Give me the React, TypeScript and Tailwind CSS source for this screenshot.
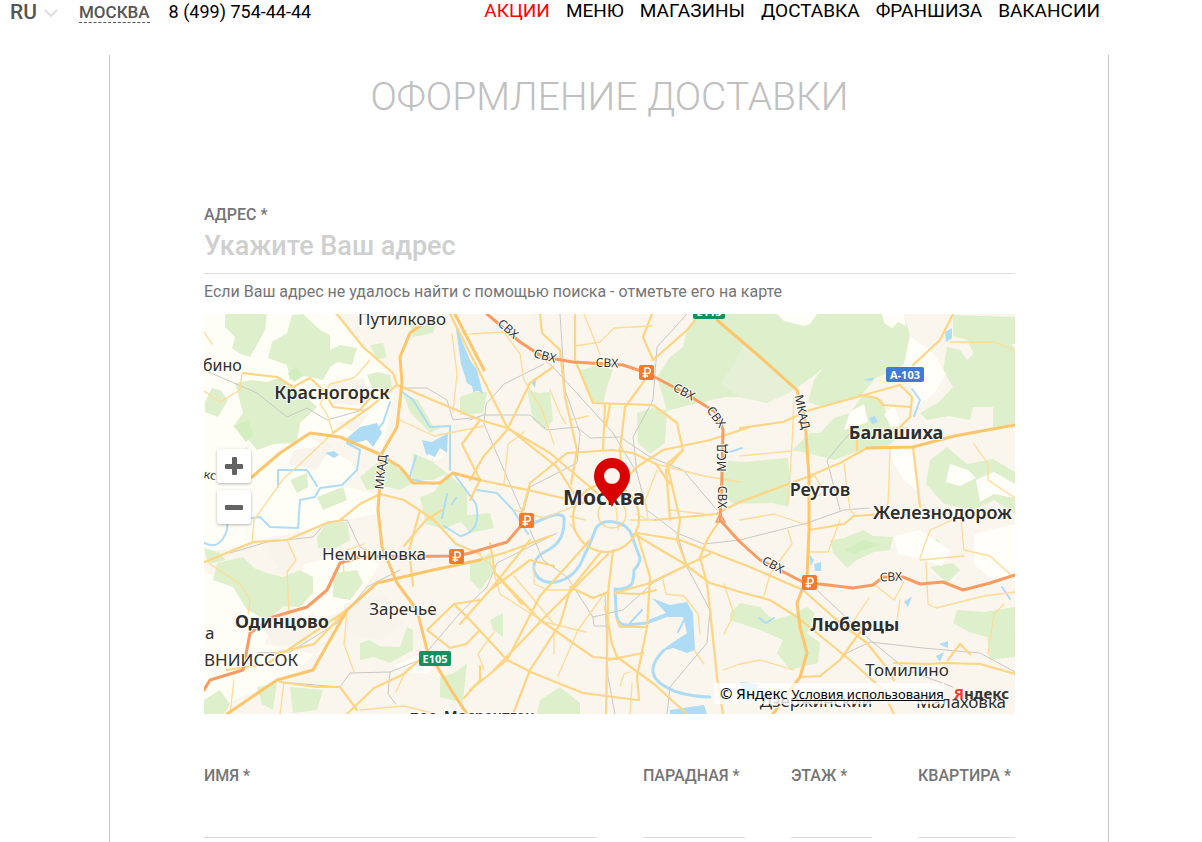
import { useState } from "react";
import clsx from "clsx";

const NAV_LINKS = ["АКЦИИ", "МЕНЮ", "МАГАЗИНЫ", "ДОСТАВКА", "ФРАНШИЗА", "ВАКАНСИИ"];

const FOREST = [
    "M21,0 63,0 61,16 55,27 46,43 36,40 28,34 31,23 21,13Z",
    "M88,1 99,0 116,16 126,21 126,36 136,31 153,34 148,51 134,48 126,53 119,66 100,62 86,66 83,51 64,44 68,28 83,19Z",
    "M31,69 48,66 63,68 74,64 84,69 99,80 113,93 96,109 93,129 70,130 53,136 39,119 29,113 39,99Z",
    "M1,88 8,74 16,76 24,86 14,103 1,98Z",
    "M166,31 179,29 183,43 173,46Z",
    "M163,61 174,58 186,61 189,79 169,76Z",
    "M206,9 233,6 229,19 209,23Z",
    "M156,163 172,150 183,143 196,156 209,169 196,176 183,173 163,176Z",
    "M209,139 229,148 243,159 229,166 208,166Z",
    "M216,183 230,178 243,159 263,176 263,205 240,215 222,210Z",
    "M86,166 103,159 104,173 93,179Z",
    "M113,183 139,173 143,186 119,196Z",
    "M199,79 214,86 229,112 240,112 226,119 206,98Z",
    "M256,83 270,78 283,78 279,99 256,101Z",
    "M323,76 335,79 346,78 349,106 341,116 329,106Z",
    "M376,56 396,51 409,56 403,73 399,89 388,88Z",
    "M493,0 483,16 479,33 466,43 453,63 458,80 463,97 485,91 500,88 520,83 536,83 563,89 590,76 612,60 620,53 610,66 604,88 616,92 653,83 658,80 672,64 690,56 700,50 706,22 700,0Z",
    "M433,99 448,94 463,96 461,129 446,140 434,129Z",
    "M743,33 756,36 763,46 780,30 803,23 811,36 811,110 789,113 789,93 769,93 766,106 745,102 723,106 716,99 735,88 749,73 739,56Z",
    "M749,1 811,3 811,30 790,28 770,40 763,26 749,22Z",
    "M616,119 630,104 646,99 659,81 679,86 686,113 706,113 683,133 659,136 630,146 603,139 588,136 606,119Z",
    "M516,146 540,148 584,144 586,169 584,193 569,189 530,190 516,180Z",
    "M726,146 743,133 763,150 789,145 811,158 811,200 790,186 770,196 740,190 722,170Z",
    "M0,234 14,238 22,246 4,250Z",
    "M113,223 123,209 143,208 146,226 129,236 114,234Z",
    "M13,249 39,243 50,254 63,259 79,263 96,256 109,263 109,279 96,293 80,292 63,306 43,296 29,273 9,266Z",
    "M129,259 153,256 159,269 146,286 129,283Z",
    "M156,329 165,326 176,332 196,333 203,313 209,316 209,336 186,349 170,343 156,346Z",
    "M236,363 250,359 263,349 259,389 236,383Z",
    "M86,373 119,376 113,396 89,399Z",
    "M53,373 73,369 69,396 58,390Z",
    "M0,386 16,376 26,390 20,400 0,400Z",
    "M266,249 286,239 289,259 276,276 266,266Z",
    "M252,202 286,199 290,214 266,219Z",
    "M286,306 299,299 299,323 289,316Z",
    "M333,400 336,386 356,373 376,389 376,400Z",
    "M526,299 536,289 556,293 569,306 590,300 603,293 611,299 603,319 616,329 614,349 586,356 573,339 579,326 556,316 526,306Z",
    "M626,226 640,224 659,216 669,222 689,223 686,236 670,238 653,246 643,254 629,239Z",
    "M733,224 738,233 730,241 726,241Z",
    "M726,253 749,249 756,256 743,269Z",
    "M749,309 753,296 780,298 811,293 811,343 786,346 783,323 765,318Z",
];

const OUTSKIRTS = [
    "M0,0 130,0 160,35 185,60 190,80 178,138 140,124 106,119 50,160 0,180Z",
    "M0,100 30,120 60,140 100,120 150,150 152,160 138,171 110,176 94,190 60,206 0,200Z",
    "M94,180 140,172 170,180 172,200 140,206 110,214 60,226 0,240 0,200Z",
    "M0,256 40,280 70,310 60,330 110,340 90,360 0,400Z",
    "M100,250 150,240 176,250 150,290 110,310 90,296Z",
];

const CLEARINGS = [
    "M573,0 613,0 606,10 600,12 580,7Z",
    "M678,0 700,0 702,12 694,8 688,14 680,9Z",
    "M706,22 730,40 742,60 730,80 712,92 706,70 700,50Z",
    "M646,98 660,90 664,108 640,116Z",
    "M680,100 690,92 696,108 688,114Z",
    "M684,136 710,136 716,180 700,166 690,150Z",
    "M746,150 764,156 772,164 756,172 742,168Z",
    "M772,166 790,158 811,170 811,184 790,180 776,188Z",
    "M690,222 716,216 746,236 738,252 714,244 694,240Z",
    "M770,220 811,210 811,262 786,264 770,250Z",
    "M220,338 232,346 224,360 204,358 190,352Z",
];

const PONDS = [
    "M251,8 259,29 266,46 273,56 279,80 263,69 257,50Z",
    "M266,53 271,53 278,76 269,78Z",
    "M156,113 173,109 178,119 169,133 163,126 143,131 143,124Z",
    "M218,126 228,128 244,119 243,139 236,134 229,146 222,140Z",
    "M121,139 130,137 135,141 130,144Z",
    "M448,284 466,291 483,288 489,299 491,336 483,339 469,334 456,338 465,331 483,319 479,303 463,303 444,310 444,306 462,299Z",
    "M741,18 748,14 748,24 742,28Z",
    "M659,66 670,63 668,67Z",
    "M665,104 671,102 674,108 668,110Z",
    "M605,240 610,246 607,252Z",
    "M610,250 617,248 617,257 611,257Z",
    "M700,288 708,282 704,293Z",
    "M735,330 744,327 744,334Z",
    "M732,342 740,338 736,348Z",
    "M536,368 554,370 550,386 540,388Z",
    "M466,396 486,393 500,391 503,400 466,400Z",
    "M327,68 332,66 331,74Z",
];

const RIVERS = [
    "M186,88 179,109 173,116",
    "M143,129 156,136 153,156 138,171 116,174 111,183 96,186 94,214 66,213 56,203 48,204",
    "M0,229 Q16,237 23,216 L24,200",
    "M74,173 74,156 103,156 113,172",
    "M196,76 209,86 226,113 246,112 246,156",
    "M212,142 205,165 230,170",
    "M250,160 262,176 272,190 Q278,218 256,222 L240,212",
    "M238,204 243,180 M248,190 252,184",
    "M273,176 293,179 309,196 324,220",
    "M708,75 716,86 710,102",
    "M526,138 538,134",
    "M555,304 562,309 570,304",
    "M426,309 438,296 M474,318 480,306",
    "M798,273 806,285",
];

const MOSKVA_RIVER =
    "M324,212 Q340,204 350,201 Q362,199 360,208 Q360,228 344,236 Q328,244 330,256 Q334,270 352,268 Q372,264 380,242 Q388,226 392,214 Q398,206 410,208 Q424,210 428,222 Q432,234 436,244 Q436,250 430,256 Q430,266 427,271 Q420,276 411,275 L412,296 Q412,312 424,311 L443,309";

const STREETS = [
    "M0,18 8,30 M0,77 16,88 36,76 38,59",
    "M129,119 123,100 116,90 126,70 150,64 166,46",
    "M48,228 50,206 80,164 96,150 129,119",
    "M83,226 92,246 83,258 85,300",
    "M6,250 36,270 46,286 44,300",
    "M140,258 138,238 160,230 M143,296 140,330 150,358",
    "M248,20 253,60 249,98 M196,106 230,122 280,112",
    "M266,20 300,18 316,40 320,66 338,96 350,130",
    "M371,32 396,28 410,14 448,12 M346,76 356,100 362,110",
    "M300,170 304,130 320,118 M366,106 384,102 M380,0 396,40",
    "M276,242 288,252 296,280 340,308 382,318",
    "M310,262 350,310 M330,252 330,270 344,276 366,276",
    "M354,362 374,316 400,280 M350,340 350,320",
    "M416,372 420,360 426,358 M426,400 428,370",
    "M459,266 462,280 480,282 494,300 496,320 M520,270 530,300 520,320",
    "M519,356 536,350 556,346 590,356",
    "M590,83 588,130 584,190 M536,142 588,137",
    "M684,190 686,136 M746,28 790,28 811,36",
    "M770,130 784,150 784,166 811,184",
    "M603,164 611,162 620,178 607,186 M640,150 646,196 650,200",
    "M536,206 570,200 606,212 M605,238 624,238 636,206",
    "M716,244 726,216 748,206 M757,206 760,236 786,242 806,260",
    "M716,246 760,242 M722,248 724,290 732,294 780,282 811,278",
    "M671,271 690,286 700,268 M693,306 696,286",
    "M665,284 650,306 M784,340 790,300 800,290",
    "M584,216 588,230 566,260 560,282",
    "M280,356 274,340 290,318 M490,336 500,350",
    "M192,378 202,356 228,338 240,366",
    "M80,368 76,400 M30,366 26,400 M156,396 200,392 232,400",
    "M379,189 340,204 310,196 M381,206 366,202 M426,206 452,206",
    "M366,210 380,230 M410,170 414,216 M432,200 444,206 442,190",
    "M452,150 500,162 536,168 M466,196 500,200 M453,156 440,190",
];

const ROADS = [
    "M133,0 159,33 189,59 193,71 276,106 303,114 346,139 393,179",
    "M39,59 73,63 89,73 106,64 119,76 129,93 156,96 166,84",
    "M129,119 166,93 193,71",
    "M246,0 273,53 303,113 353,153 376,189",
    "M276,166 333,178 379,189",
    "M1,248 49,228 83,226 123,209 139,206",
    "M136,206 156,190 176,180 200,186 230,206 252,230 276,240",
    "M276,106 258,130 276,166 266,186",
    "M76,368 112,373 136,373 153,396",
    "M143,400 170,374 200,360 222,340",
    "M223,316 250,290 276,286 M223,316 246,334 262,330 276,316",
    "M216,196 205,236 209,272 M200,232 222,206 238,196",
    "M143,296 110,330 69,340 M143,296 63,350 23,356",
    "M336,0 338,19 356,36 361,83 373,136 367,170",
    "M371,0 371,46 389,89 449,91 473,109 479,136 462,156 466,206",
    "M448,0 439,23 449,46 483,16 496,0",
    "M446,59 421,93 416,136 418,169",
    "M401,91 399,136 M406,91 402,112",
    "M266,166 279,143 303,116 326,69 349,53",
    "M316,206 326,169 363,139 409,136 429,139 452,150 466,170",
    "M546,113 506,126 459,136 433,153 418,169",
    "M536,114 579,108 606,96 653,83 696,71 708,83 706,103 696,113",
    "M656,81 673,84 679,91 706,93",
    "M749,0 736,26 709,51",
    "M450,206 512,200 536,188 603,163 636,149 663,134 709,133",
    "M709,133 716,193 M653,136 653,126",
    "M430,220 479,249 506,269 536,278 566,286 593,303 646,346 676,373 690,400",
    "M433,219 476,226 546,253 599,276 636,309 663,329 679,349 690,366",
    "M409,236 404,279 402,400",
    "M401,293 408,330 413,343 450,370 483,400",
    "M432,216 446,263 443,313 433,363 435,386",
    "M404,346 439,339",
    "M396,239 366,276 356,310 326,356 309,400",
    "M386,226 336,282 303,346 266,376",
    "M404,240 340,304 290,356",
    "M326,226 286,276 256,310",
    "M291,259 336,306 389,343 413,345",
    "M250,290 266,306 303,346 329,359 379,379 433,386",
    "M286,229 291,259 318,290 M286,276 326,246 350,252",
    "M366,273 389,284 404,278",
    "M506,240 446,269 411,279 436,280 452,276",
    "M516,206 504,224 496,243 503,270 506,296 513,363 519,400",
    "M479,136 463,150 476,206 473,226 483,252",
    "M413,306 416,313 443,313 M276,352 276,366 260,384",
    "M605,216 640,210 650,202 680,200",
    "M596,363 616,362 636,346 656,318",
    "M690,349 726,350 740,349 776,350 811,360 M744,346 756,330 766,340",
    "M276,246 303,238 346,222",
];

const HIGHWAYS = [
    "M229,3 206,19 196,43 198,69 193,113 178,139 174,196 178,233 193,269 213,296 223,336 249,379 263,400",
    "M513,6 556,43 593,76 601,106 605,163 605,216 603,263 593,289 596,313 603,339 596,363 569,400",
    "M48,163 76,139 106,119 136,123 173,139 196,153 209,169 236,169 249,159 276,166",
    "M23,400 73,366 109,356 143,296 173,269 229,256 276,246",
    "M663,134 709,133 750,122 811,111",
    "M251,0 280,56",
];

const TOLL_ROADS = [
    "M283,0 316,28 339,43 369,48 419,51 443,59 479,78 513,99 519,116 518,163 516,206 536,228 556,246 599,268 649,274 669,271 679,263 699,263 716,270 739,268 759,276 786,269 811,261",
    "M322,206 303,228 266,239 252,242 156,243 136,249 123,276 103,293 69,303 46,319 39,356 6,366 0,376",
];

const RAILWAYS = [
    "M0,56 53,79 83,103 103,94 123,106 166,94",
    "M199,74 223,74 243,86 249,106 276,103",
    "M26,239 63,228 109,223 123,208 143,206 156,233 176,243",
    "M196,256 163,273 133,309 86,338 53,339",
    "M76,368 136,373 146,359 186,358 216,346 256,299 283,273 293,249 353,219",
    "M186,358 184,380 192,390",
    "M326,216 339,246 363,263 389,303 419,296 449,269 499,243",
    "M356,0 361,76 376,119 373,149 326,173 320,196",
    "M303,18 349,53 409,119 433,159 443,196 473,219 483,253 506,296 503,329 466,373 463,400",
    "M483,0 453,33 449,86 429,123 433,159",
    "M266,106 279,101 326,101 343,116 373,113 386,124 416,123 446,143 479,156 513,196",
    "M319,200 280,110 282,90 300,70 340,50",
    "M401,280 404,363 411,400 M389,303 390,312 403,312",
    "M473,219 500,230 536,226 603,209 640,196 665,194",
    "M646,119 623,146 636,196",
    "M613,276 666,326 703,356 749,373",
    "M616,363 643,339 666,328 719,334 776,339 811,358",
];

interface Place {
    name: string;
    x: number;
    y: number;
    className?: string;
    anchor?: "start" | "middle";
}

const PLACES: Place[] = [
    { name: "Путилково", x: 198, y: 11, className: "text-[17px]" },
    { name: "бино", x: -1, y: 57, className: "text-[16px]", anchor: "start" },
    { name: "Красногорск", x: 128, y: 85, className: "text-[18px] font-semibold" },
    { name: "Балашиха", x: 692, y: 125, className: "text-[18px] font-bold" },
    { name: "Реутов", x: 616, y: 182, className: "text-[18px] font-semibold" },
    { name: "Железнодорож", x: 669, y: 205, className: "text-[18px] font-semibold", anchor: "start" },
    { name: "Москва", x: 400, y: 191, className: "text-[21px] font-bold" },
    { name: "Немчиновка", x: 170, y: 246, className: "text-[17px]" },
    { name: "Заречье", x: 199, y: 301, className: "text-[17px]" },
    { name: "Одинцово", x: 78, y: 314, className: "text-[18px] font-bold" },
    { name: "а", x: 1, y: 325, className: "text-[17px]", anchor: "start" },
    { name: "ВНИИССОК", x: 0, y: 352, className: "text-[17px]", anchor: "start" },
    { name: "Люберцы", x: 651, y: 317, className: "text-[18px] font-bold" },
    { name: "Томилино", x: 703, y: 362, className: "text-[17px]" },
    { name: "Дзержинский", x: 612, y: 393, className: "text-[17px]" },
    { name: "Малаховка", x: 757, y: 394, className: "text-[17px]" },
    { name: "пос. Мосрентген", x: 268, y: 407, className: "text-[15px] font-semibold" },
];

const ROAD_NAMES = [
    { name: "СВХ", x: 304, y: 15, angle: 42 },
    { name: "СВХ", x: 341, y: 42, angle: 15 },
    { name: "СВХ", x: 403, y: 49, angle: 3 },
    { name: "СВХ", x: 480, y: 78, angle: 28 },
    { name: "СВХ", x: 512, y: 103, angle: 54 },
    { name: "МСД", x: 518, y: 144, angle: -90 },
    { name: "СВХ", x: 518, y: 183, angle: 90 },
    { name: "СВХ", x: 569, y: 251, angle: 28 },
    { name: "СВХ", x: 687, y: 263, angle: -2 },
    { name: "МКАД", x: 598, y: 98, angle: 78 },
    { name: "МКАД", x: 177, y: 158, angle: -84 },
    { name: "кс", x: 6, y: 161, angle: 10 },
];

const TOLL_BADGES = [
    [442, 58],
    [322, 206],
    [252, 242],
    [605, 268],
];

function RoadShield({ x, y, width, fill, label }: { x: number; y: number; width: number; fill: string; label: string }) {
    return (
        <g>
            <rect x={x} y={y} width={width} height="15" rx="2" fill={fill} />
            <text x={x + width / 2} y={y + 12} textAnchor="middle" className="text-[11px] font-bold" fill="#fff">
                {label}
            </text>
        </g>
    );
}

function CityMap() {
    return (
        <svg
            viewBox="0 0 811 400"
            preserveAspectRatio="xMidYMid slice"
            className="block h-[400px] w-full font-['Noto_Sans','Open_Sans',sans-serif]"
            role="img"
            aria-label="Карта Москвы"
        >
            <rect width="811" height="400" fill="#faf6ed" />
            <g fill="#fffef6">{OUTSKIRTS.map((d) => <path key={d} d={d} />)}</g>
            <path
                d="M50,84 84,70 96,80 88,96 62,100Z M126,70 160,64 164,92 130,90Z M90,136 130,130 112,156 84,150Z M130,110 165,100 150,118Z M60,226 84,228 96,246 78,262 66,240Z M140,290 180,280 200,310 176,326 140,320Z M16,150 46,130 40,146Z M60,316 110,300 100,330 70,332Z"
                fill="#f8f4ec"
            />
            <g fill="#ddf0cb">{FOREST.map((d) => <path key={d} d={d} />)}</g>
            <path d="M540,30 590,76 563,89 536,83 516,70 530,50Z" fill="#e6f0d6" />
            <path d="M84,60 92,52 99,62 90,68Z M30,112 44,106 50,120 42,128Z M640,236 660,226 676,230 650,240Z" fill="#d3eebe" />
            <g fill="#fffef8">{CLEARINGS.map((d) => <path key={d} d={d} />)}</g>
            <g fill="#afdcf5">{PONDS.map((d) => <path key={d} d={d} />)}</g>
            <path d="M224,141 Q236,150 240,137" fill="none" stroke="#fffef6" strokeWidth="3" />

            <g fill="none" strokeLinejoin="round" strokeLinecap="round">
                <g stroke="#afdcf5" strokeWidth="2">{RIVERS.map((d) => <path key={d} d={d} />)}</g>
                <path d={MOSKVA_RIVER} stroke="#afdcf5" strokeWidth="3" />
                <path d="M460,336 Q440,356 456,369 T506,383" stroke="#afdcf5" strokeWidth="3" />
                <g stroke="#c9c8c6" strokeWidth="1">{RAILWAYS.map((d) => <path key={d} d={d} />)}</g>
                <g stroke="#fedb97" strokeWidth="1.3">{STREETS.map((d) => <path key={d} d={d} />)}</g>
                <g stroke="#fed583" strokeWidth="2.2">
                    {ROADS.map((d) => <path key={d} d={d} />)}
                    <ellipse cx="402" cy="204" rx="33" ry="34" />
                    <ellipse cx="408" cy="200" rx="14" ry="14" strokeWidth="1.3" />
                </g>
                <g stroke="#fdc66c" strokeWidth="3">{HIGHWAYS.map((d) => <path key={d} d={d} />)}</g>
                <g stroke="#f99b63" strokeWidth="3">{TOLL_ROADS.map((d) => <path key={d} d={d} />)}</g>
                <path d="M512,208 516,200 521,208Z" stroke="#f99b63" strokeWidth="1.5" />
            </g>

            <g fill="#2e2e2e" stroke="#fffef8" strokeWidth="2" strokeLinejoin="round" paintOrder="stroke">
                {PLACES.map(({ name, x, y, className, anchor = "middle" }) => (
                    <text key={name} x={x} y={y} textAnchor={anchor} className={className}>
                        {name}
                    </text>
                ))}
                {ROAD_NAMES.map(({ name, x, y, angle }) => (
                    <text
                        key={`${x}-${y}`}
                        transform={`translate(${x} ${y}) rotate(${angle})`}
                        y="4"
                        textAnchor="middle"
                        className="text-[12px]"
                    >
                        {name}
                    </text>
                ))}
            </g>

            {TOLL_BADGES.map(([x, y]) => (
                <g key={x}>
                    <rect x={x - 7} y={y - 7} width="15" height="15" rx="2" fill="#f77a2b" />
                    <path
                        d={`M${x - 1},${y + 6} v-10 h2.5 a2.7,2.7 0 0 1 0,5.4 h-5 M${x - 3.5},${y + 4} h5.5`}
                        fill="none"
                        stroke="#fff"
                        strokeWidth="1.5"
                    />
                </g>
            ))}
            <RoadShield x={682} y={53} width={38} fill="#3d7bdb" label="А-103" />
            <RoadShield x={215} y={337} width={32} fill="#0d9260" label="E105" />
            <RoadShield x={489} y={-10} width={32} fill="#0d9260" label="E115" />

            <path
                d="M408,193 C404,183 390,175 390,162 A18,18 0 1 1 426,162 C426,175 412,183 408,193Z M408,154 a8,8 0 1 0 0,16 a8,8 0 1 0 0,-16Z"
                fill="#d90000"
                fillRule="evenodd"
            />
        </svg>
    );
}

function ZoomButton({ label, plus }: { label: string; plus?: boolean }) {
    return (
        <button
            type="button"
            aria-label={label}
            className="flex size-[34px] items-center justify-center rounded-[3px] bg-white shadow-[0_1px_3px_rgba(0,0,0,0.3)]"
        >
            <svg viewBox="0 0 18 18" className="size-[18px]" fill="#636363">
                <rect x="0" y="7" width="18" height="5" rx="1" />
                {plus && <rect x="7" y="0" width="5" height="18" rx="1" />}
            </svg>
        </button>
    );
}

function Field({ id, label }: { id: string; label: string }) {
    return (
        <div className="min-w-0">
            <label htmlFor={id} className="block text-[16px] leading-5 font-medium whitespace-nowrap text-[#757575]">
                {label} *
            </label>
            <input id={id} type="text" className="block h-[52px] w-full border-b border-[#dcdcdc] text-[27px] outline-none" />
        </div>
    );
}

export default function App() {
    const [address, setAddress] = useState("");

    return (
        <div className="overflow-hidden bg-white font-['Roboto','Noto_Sans',sans-serif]">
            <header className="flex h-[55px] items-start justify-between pr-[102px] pl-[10px]">
                <div className="flex items-start">
                    <button type="button" className="flex items-center gap-[7px] text-[21px] leading-[25px] font-medium text-[#555]">
                        RU
                        <svg viewBox="0 0 14 8" className="h-2 w-[14px]" fill="none" stroke="#dedede" strokeWidth="2">
                            <path d="M1,1 7,7 13,1" />
                        </svg>
                    </button>
                    <a
                        href="#city"
                        className="mt-[3px] ml-[21px] border-b border-dashed border-[#555] text-[17px] leading-[19px] font-medium text-[#555]"
                    >
                        МОСКВА
                    </a>
                    <a href="tel:84997544444" className="mt-[2px] ml-[19px] text-[18px] leading-5 text-black">
                        8 (499) 754-44-44
                    </a>
                </div>
                <nav className="flex gap-4 text-[19px] leading-[22px]">
                    {NAV_LINKS.map((link, i) => (
                        <a key={link} href="#" className={clsx(i === 0 ? "text-[#f00]" : "text-black")}>
                            {link}
                        </a>
                    ))}
                </nav>
            </header>

            <main className="mr-[93px] ml-[109px] border-x border-[#c8c8c8] pr-[93px] pb-1 pl-[94px]">
                <h1 className="pt-[18px] text-center text-[39px] leading-[48px] font-light text-[#c0c0c0]">
                    ОФОРМЛЕНИЕ ДОСТАВКИ
                </h1>

                <form className="mt-[84px]">
                    <label htmlFor="address" className="block text-[16px] leading-5 font-medium text-[#757575]">
                        АДРЕС *
                    </label>
                    <input
                        id="address"
                        type="text"
                        value={address}
                        onChange={(e) => setAddress(e.target.value)}
                        placeholder="Укажите Ваш адрес"
                        className="block h-[49px] w-full border-b border-[#dcdcdc] pb-[6px] text-[27px] font-medium text-[#555] outline-none placeholder:text-[#cfcfcf]"
                    />
                    <p className="pt-2 text-[16px] leading-5 text-[#757575]">
                        Если Ваш адрес не удалось найти с помощью поиска - отметьте его на карте
                    </p>

                    <div className="relative mt-3 h-[400px] overflow-hidden">
                        <CityMap />
                        <div className="absolute top-[135px] left-[13px] flex flex-col gap-[7px]">
                            <ZoomButton label="Приблизить" plus />
                            <ZoomButton label="Отдалить" />
                        </div>
                        <div className="absolute right-[6px] bottom-[11px] flex h-5 items-center font-['Noto_Sans',sans-serif] text-black">
                            <div className="flex items-baseline gap-1 bg-white/75 pl-[6px] text-[13px] leading-5">
                                <span className="text-[15px]">© Яндекс</span>
                                <a href="#terms" className="underline">
                                    Условия использования
                                </a>
                            </div>
                            <a href="#yandex" className="ml-[10px] text-[15px] leading-5 font-bold text-[#333]">
                                <span className="text-[#f33]">Я</span>ндекс
                            </a>
                        </div>
                    </div>

                    <div className="mt-[52px] grid grid-cols-[393fr_102fr_81fr_97fr] gap-x-[46px]">
                        <Field id="name" label="ИМЯ" />
                        <Field id="entrance" label="ПАРАДНАЯ" />
                        <Field id="floor" label="ЭТАЖ" />
                        <Field id="flat" label="КВАРТИРА" />
                    </div>
                </form>
            </main>
        </div>
    );
}
